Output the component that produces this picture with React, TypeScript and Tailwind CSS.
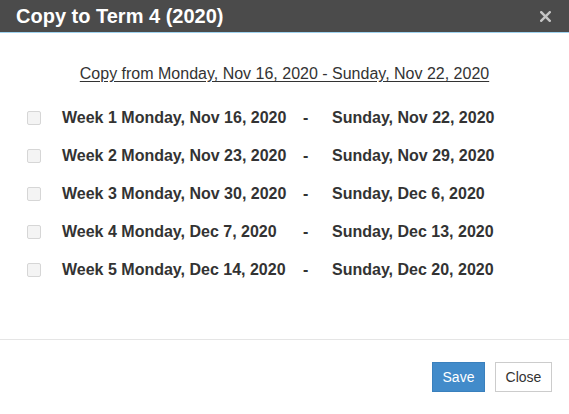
import React from "react";

const weeks = [
    { label: "Week 1 Monday, Nov 16, 2020", end: "Sunday, Nov 22, 2020" },
    { label: "Week 2 Monday, Nov 23, 2020", end: "Sunday, Nov 29, 2020" },
    { label: "Week 3 Monday, Nov 30, 2020", end: "Sunday, Dec 6, 2020" },
    { label: "Week 4 Monday, Dec 7, 2020", end: "Sunday, Dec 13, 2020" },
    { label: "Week 5 Monday, Dec 14, 2020", end: "Sunday, Dec 20, 2020" },
];

export default function App() {
    return (
        <div className="w-[569px] h-[414px] bg-white flex flex-col font-['Liberation_Sans',Arial,sans-serif] text-[#333]">
            {/* Header */}
            <div className="h-[33px] bg-[#4b4b4b] border-b border-[#9fd3ef] flex items-center justify-between pl-[16px] pr-[18px] shrink-0">
                <h2 className="text-[20px] font-bold text-white leading-none">Copy to Term 4 (2020)</h2>
                <svg width="11" height="11" viewBox="0 0 11 11" className="text-[#c4c4c4]">
                    <path d="M1.2 1.2L9.8 9.8M9.8 1.2L1.2 9.8" stroke="currentColor" strokeWidth="2.4" strokeLinecap="square" />
                </svg>
            </div>

            {/* Body */}
            <div className="h-[307px] border-b border-[#e5e5e5] pt-[31px] shrink-0">
                <p className="text-center text-[16px] leading-[20px] underline underline-offset-2">
                    Copy from Monday, Nov 16, 2020 - Sunday, Nov 22, 2020
                </p>
                <div className="mt-[15px] flex flex-col">
                    {weeks.map((w) => (
                        <div key={w.label} className="h-[38px] flex items-center pl-[27px] text-[16px] font-bold">
                            <span className="w-[14px] h-[14px] rounded-[2px] border border-[#d6d6d6] bg-[#f4f4f4] shrink-0" />
                            <span className="ml-[21px] w-[241px] shrink-0">{w.label}</span>
                            <span className="w-[29px] shrink-0">-</span>
                            <span>{w.end}</span>
                        </div>
                    ))}
                </div>
            </div>

            {/* Footer */}
            <div className="flex justify-end gap-[10px] pt-[22px] pr-[17px]">
                <button className="h-[30px] w-[53px] bg-[#428bca] text-white text-[14px] border border-[#3a80bd]">
                    Save
                </button>
                <button className="h-[30px] w-[57px] bg-white text-[#333] text-[14px] border border-[#cccccc]">
                    Close
                </button>
            </div>
        </div>
    );
}
